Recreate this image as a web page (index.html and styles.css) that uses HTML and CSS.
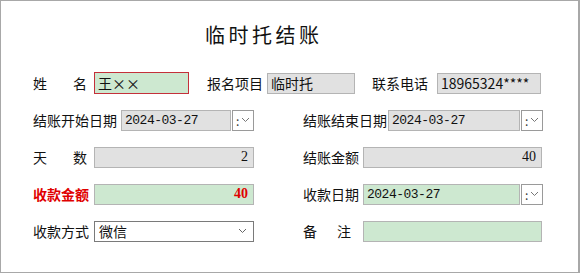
FILE: index.html
```html
<!DOCTYPE html>
<html lang="zh-CN">
<head>
  <meta charset="UTF-8" />
  <title>临时托结账</title>
  <link rel="stylesheet" href="styles.css">
</head>
<body>
  <div class="panel">
    <h1>临时托结账</h1>

    <div class="row">
      <div class="field f-name">
        <label class="spread w54"><span>姓</span><span>名</span></label>
        <input class="box green red-border w95" value="王××" />
      </div>
      <div class="field f-item">
        <label class="w60">报名项目</label>
        <input class="box gray w88" value="临时托" readonly />
      </div>
      <div class="field">
        <label class="w65">联系电话</label>
        <input class="box gray w104" value="18965324****" readonly />
      </div>
    </div>

    <div class="row">
      <div class="field half">
        <label class="w88">结账开始日期</label>
        <input class="box gray w110 mono" value="2024-03-27" readonly />
        <span class="drop-btn">:<svg width="9" height="6" viewBox="0 0 9 6"><path d="M1 1l3.5 3.5L8 1" fill="none" stroke="#777" stroke-width="1"/></svg></span>
      </div>
      <div class="field">
        <label class="w85">结账结束日期</label>
        <input class="box gray w132 mono" value="2024-03-27" readonly />
        <span class="drop-btn">:<svg width="9" height="6" viewBox="0 0 9 6"><path d="M1 1l3.5 3.5L8 1" fill="none" stroke="#777" stroke-width="1"/></svg></span>
      </div>
    </div>

    <div class="row">
      <div class="field half">
        <label class="spread w54"><span>天</span><span>数</span></label>
        <input class="box gray w160 num" value="2" readonly />
      </div>
      <div class="field">
        <label class="w60">结账金额</label>
        <input class="box gray w179 num" value="40" readonly />
      </div>
    </div>

    <div class="row">
      <div class="field half">
        <label class="w61 strong">收款金额</label>
        <input class="box green w160 num strong" value="40" />
      </div>
      <div class="field">
        <label class="w60">收款日期</label>
        <input class="box green w157 mono" value="2024-03-27" />
        <span class="drop-btn">:<svg width="9" height="6" viewBox="0 0 9 6"><path d="M1 1l3.5 3.5L8 1" fill="none" stroke="#777" stroke-width="1"/></svg></span>
      </div>
    </div>

    <div class="row">
      <div class="field half">
        <label class="w61">收款方式</label>
        <div class="select w160">
          <span>微信</span>
          <svg width="9" height="6" viewBox="0 0 9 6"><path d="M1 1l3.5 3.5L8 1" fill="none" stroke="#666" stroke-width="1"/></svg>
        </div>
      </div>
      <div class="field">
        <label class="spread w48"><span>备</span><span>注</span></label>
        <input class="box green w179" value="" />
      </div>
    </div>
  </div>
</body>
</html>
```

FILE: styles.css
```css
body {
  margin: 0;
  background: #fff;
  font-family: "Noto Sans CJK SC", "Liberation Sans", sans-serif;
  color: #111;
}

.panel {
  width: 580px;
  height: 273px;
  box-sizing: border-box;
  border: 1px solid #a8a8a8;
  border-right-width: 2px;
  padding: 22px 0 0 32px;
}

h1 {
  margin: 0 0 25px;
  padding-left: 172px;
  height: 24px;
  line-height: 24px;
  font-size: 20px;
  font-weight: normal;
  letter-spacing: 3.5px;
}

.row {
  display: flex;
  align-items: center;
  height: 22px;
  margin-bottom: 15px;
}

.field {
  display: flex;
  align-items: center;
  height: 100%;
}

.half { width: 270px; }
.f-name { width: 174px; }
.f-item { width: 165px; }

label {
  font-size: 14px;
  line-height: 22px;
  white-space: nowrap;
}

.spread {
  display: flex;
  justify-content: space-between;
  margin-right: 7px;
}

.w48 { width: 48px; margin-right: 12px; }
.w54 { width: 54px; }
.w60 { width: 60px; }
.w61 { width: 61px; }
.w65 { width: 65px; }
.w85 { width: 85px; }
.w88 { width: 88px; }

.box {
  box-sizing: border-box;
  height: 21px;
  margin: 0;
  padding: 0 3px;
  border: 1px solid #b4b4b4;
  font-family: "Noto Sans CJK SC", "Liberation Sans", sans-serif;
  font-size: 14px;
  color: #111;
  outline: none;
}

.w95 { width: 95px; height: 22px; }
.w88.box { width: 88px; }
.w104 { width: 104px; }
.w110 { width: 110px; }
.w132 { width: 132px; }
.w157 { width: 157px; }
.w160 { width: 160px; }
.w179 { width: 179px; }

.gray { background: #e1e1e1; }
.green { background: #cde8d0; }
.red-border { border-color: #c4303a; }

.mono {
  font-family: "Liberation Mono", "DejaVu Sans Mono", monospace;
  font-size: 13px;
  letter-spacing: -0.5px;
}

.num {
  text-align: right;
  font-family: "Liberation Serif", serif;
  font-size: 14px;
  padding-right: 5px;
}

.strong {
  color: #e00000;
  font-weight: bold;
}

.drop-btn {
  box-sizing: border-box;
  display: flex;
  align-items: center;
  gap: 2px;
  width: 22px;
  height: 21px;
  margin-left: 1px;
  padding-left: 3px;
  border: 1px solid #9a9a9a;
  background: #fff;
  font-size: 12px;
  color: #333;
}

.select {
  box-sizing: border-box;
  display: flex;
  align-items: center;
  justify-content: space-between;
  height: 21px;
  padding: 0 6px 0 4px;
  border: 1px solid #7a7a7a;
  background: #fff;
  font-size: 14px;
}
```
